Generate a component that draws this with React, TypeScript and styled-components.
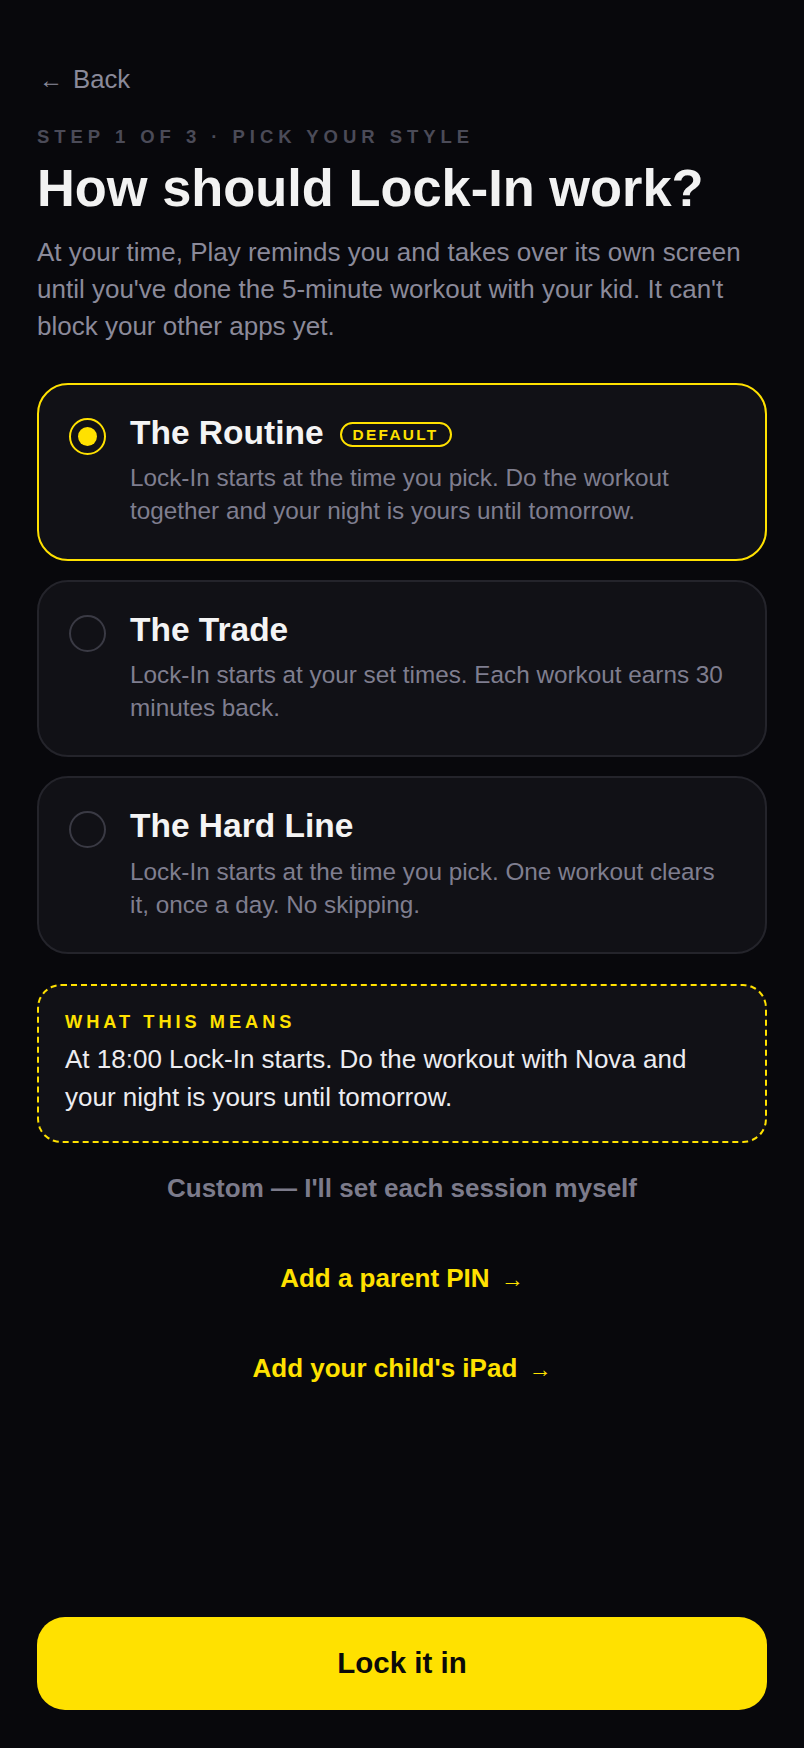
import React, { useState } from "react";
import styled, { createGlobalStyle } from "styled-components";

const GlobalStyle = createGlobalStyle`
  html, body {
    margin: 0;
    padding: 0;
    background: #08080c;
  }
  * { box-sizing: border-box; }
  body {
    font-family: "Liberation Sans", Arial, Helvetica, sans-serif;
    -webkit-font-smoothing: antialiased;
  }
`;

const YELLOW = "#ffe100";

const Page = styled.div`
  min-height: 100vh;
  display: flex;
  flex-direction: column;
  padding: 64px 37px 38px;
  background: #08080c;
`;

const BackButton = styled.button`
  align-self: flex-start;
  display: flex;
  align-items: baseline;
  gap: 10px;
  background: none;
  border: none;
  padding: 0;
  margin: 0;
  font-family: inherit;
  font-size: 25.7px;
  line-height: 1.2;
  color: #8a8a9a;
  cursor: pointer;
`;

const BackArrow = styled.span`
  font-size: 24px;
  margin-left: 2px;
`;

const StepLabel = styled.div`
  margin-top: 31px;
  font-size: 18.5px;
  line-height: 1.2;
  font-weight: 700;
  letter-spacing: 0.268em;
  color: #4b4b58;
  text-transform: uppercase;
`;

const Title = styled.h1`
  margin: 12px 0 0;
  font-size: 52.4px;
  line-height: 1.1;
  font-weight: 700;
  color: #f2f2f2;
`;

const Lead = styled.p`
  margin: 16px 0 0;
  font-size: 26px;
  line-height: 37.33px;
  color: #8b8a9a;
`;

const Options = styled.div`
  margin-top: 37px;
  display: flex;
  flex-direction: column;
  gap: 19px;
`;

const OptionCard = styled.button<{ $selected: boolean }>`
  display: flex;
  align-items: flex-start;
  gap: 24px;
  width: 100%;
  text-align: left;
  padding: 31px 30px;
  border-radius: 31px;
  border: 2px solid ${(p) => (p.$selected ? YELLOW : "#24242b")};
  background: #111116;
  font-family: inherit;
  cursor: pointer;
`;

const Radio = styled.span<{ $selected: boolean }>`
  flex: 0 0 auto;
  width: 37px;
  height: 37px;
  margin-top: 2px;
  border-radius: 50%;
  border: 2px solid ${(p) => (p.$selected ? YELLOW : "#3a3a44")};
  display: flex;
  align-items: center;
  justify-content: center;
`;

const RadioDot = styled.span`
  width: 19px;
  height: 19px;
  border-radius: 50%;
  background: ${YELLOW};
`;

const OptionBody = styled.span`
  display: flex;
  flex-direction: column;
  gap: 12px;
  min-width: 0;
  flex: 1;
`;

const OptionHead = styled.span`
  display: flex;
  align-items: center;
  gap: 16px;
`;

const OptionTitle = styled.span`
  font-size: 33.5px;
  line-height: 1;
  font-weight: 700;
  color: #f4f4f4;
`;

const Badge = styled.span`
  margin-top: 4px;
  display: inline-flex;
  align-items: center;
  height: 25.4px;
  padding: 0 11px;
  border: 2px solid ${YELLOW};
  border-radius: 999px;
  font-size: 15.4px;
  line-height: 1;
  font-weight: 700;
  letter-spacing: 0.15em;
  color: ${YELLOW};
`;

const OptionDesc = styled.span`
  font-size: 24.3px;
  line-height: 33.2px;
  color: #7f7e8f;
`;

const MeansBox = styled.div`
  margin-top: 30px;
  padding: 26.5px 26px 25px;
  border: 2px dashed ${YELLOW};
  border-radius: 24px;
  background: #111116;
  display: flex;
  flex-direction: column;
  gap: 10px;
`;

const MeansLabel = styled.div`
  font-size: 18.2px;
  line-height: 1;
  font-weight: 700;
  letter-spacing: 0.22em;
  color: ${YELLOW};
`;

const MeansText = styled.div`
  font-size: 26px;
  line-height: 37.5px;
  color: #ececf0;
`;

const Actions = styled.div`
  display: flex;
  flex-direction: column;
`;

const TextAction = styled.button<{ $accent?: boolean }>`
  background: none;
  border: none;
  padding: 29.5px 0;
  font-family: inherit;
  font-size: 26px;
  line-height: 1.2;
  font-weight: 700;
  color: ${(p) => (p.$accent ? YELLOW : "#7c7b8b")};
  cursor: pointer;
  text-align: center;
`;

const Arrow = styled.span`
  font-weight: 400;
  font-size: 23px;
  margin-left: 4px;
`;

const PrimaryButton = styled.button`
  margin-top: auto;
  width: 100%;
  height: 93.5px;
  border: none;
  border-radius: 28px;
  background: ${YELLOW};
  color: #0a0a0a;
  font-family: inherit;
  font-size: 29.5px;
  font-weight: 700;
  cursor: pointer;
`;

type Option = {
  id: string;
  title: string;
  desc: string;
  badge?: string;
};

const OPTIONS: Option[] = [
  {
    id: "routine",
    title: "The Routine",
    badge: "DEFAULT",
    desc: "Lock-In starts at the time you pick. Do the workout together and your night is yours until tomorrow.",
  },
  {
    id: "trade",
    title: "The Trade",
    desc: "Lock-In starts at your set times. Each workout earns 30 minutes back.",
  },
  {
    id: "hardline",
    title: "The Hard Line",
    desc: "Lock-In starts at the time you pick. One workout clears it, once a day. No skipping.",
  },
];

export default function App() {
  const [selected, setSelected] = useState("routine");

  return (
    <>
      <GlobalStyle />
      <Page>
        <BackButton>
          <BackArrow>←</BackArrow>
          <span>Back</span>
        </BackButton>
        <StepLabel>Step 1 of 3 · Pick your style</StepLabel>
        <Title>How should Lock-In work?</Title>
        <Lead>
          At your time, Play reminds you and takes over its own screen until you've done the
          5-minute workout with your kid. It can't block your other apps yet.
        </Lead>

        <Options>
          {OPTIONS.map((o) => {
            const isSel = o.id === selected;
            return (
              <OptionCard key={o.id} $selected={isSel} onClick={() => setSelected(o.id)}>
                <Radio $selected={isSel}>{isSel && <RadioDot />}</Radio>
                <OptionBody>
                  <OptionHead>
                    <OptionTitle>{o.title}</OptionTitle>
                    {o.badge && <Badge>{o.badge}</Badge>}
                  </OptionHead>
                  <OptionDesc>{o.desc}</OptionDesc>
                </OptionBody>
              </OptionCard>
            );
          })}
        </Options>

        <MeansBox>
          <MeansLabel>WHAT THIS MEANS</MeansLabel>
          <MeansText>
            At 18:00 Lock-In starts. Do the workout with Nova and your night is yours until
            tomorrow.
          </MeansText>
        </MeansBox>

        <Actions>
          <TextAction>Custom — I'll set each session myself</TextAction>
          <TextAction $accent>
            Add a parent PIN <Arrow>→</Arrow>
          </TextAction>
          <TextAction $accent>
            Add your child's iPad <Arrow>→</Arrow>
          </TextAction>
        </Actions>

        <PrimaryButton>Lock it in</PrimaryButton>
      </Page>
    </>
  );
}
